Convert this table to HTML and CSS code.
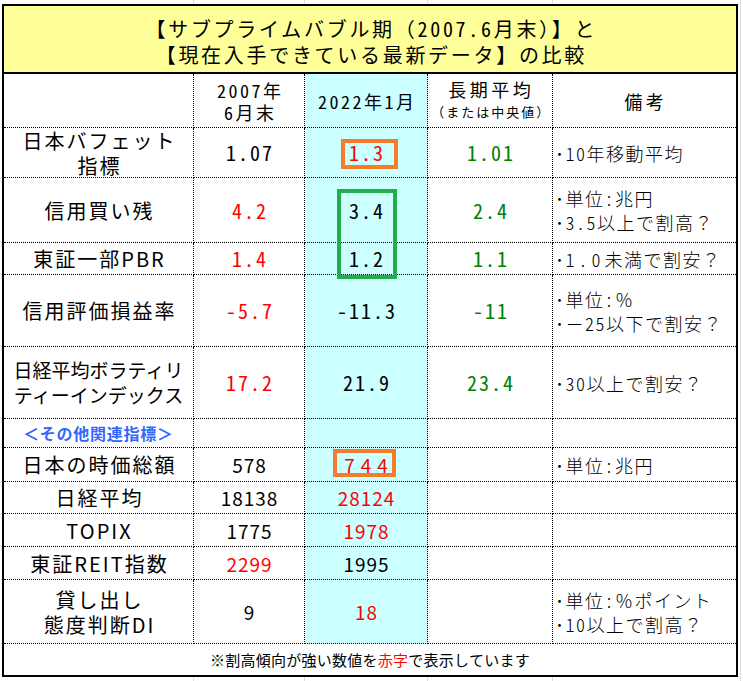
FILE: index.html
```html
<!DOCTYPE html>
<html lang="ja">
<head>
<meta charset="utf-8">
<title>サブプライムバブル期と現在の比較</title>
<link rel="stylesheet" href="styles.css">
</head>
<body>
<div class="sheet">
  <div class="title">
    <div>【サブプライムバブル期（<span class="h">2007.6</span>月末）】と</div>
    <div>【現在入手できている最新データ】の比較</div>
  </div>
  <div class="grid">
    <div class="c"></div>
    <div class="c hd"><div><span class="h">2007</span>年</div><div><span class="h">6</span>月末</div></div>
    <div class="c hd cy"><div><span class="h">2022</span>年<span class="h">1</span>月</div></div>
    <div class="c hd"><div class="big">長期平均</div><div class="small">（または中央値）</div></div>
    <div class="c hd"><div class="big">備考</div></div>

    <div class="c lb"><div>日本バフェット</div><div>指標</div></div>
    <div class="c num h">1.07</div>
    <div class="c num h cy r">1.3</div>
    <div class="c num h g">1.01</div>
    <div class="c note"><div>･<span class="h">10</span>年移動平均</div></div>

    <div class="c lb"><div>信用買い残</div></div>
    <div class="c num h r">4.2</div>
    <div class="c num h cy">3.4</div>
    <div class="c num h g">2.4</div>
    <div class="c note"><div>･単位<span class="h">:</span>兆円</div><div>･<span class="h">3.5</span>以上で割高？</div></div>

    <div class="c lb"><div>東証一部PBR</div></div>
    <div class="c num h r">1.4</div>
    <div class="c num h cy">1.2</div>
    <div class="c num h g">1.1</div>
    <div class="c note"><div>･<span class="h sp">1.0</span>未満で割安？</div></div>

    <div class="c lb"><div>信用評価損益率</div></div>
    <div class="c num h r">-5.7</div>
    <div class="c num h cy">-11.3</div>
    <div class="c num h g">-11</div>
    <div class="c note"><div>･単位<span class="h">:</span>％</div><div>･－<span class="h">25</span>以下で割安？</div></div>

    <div class="c lb vix"><div>日経平均ボラティリ</div><div>ティーインデックス</div></div>
    <div class="c num h r">17.2</div>
    <div class="c num h cy">21.9</div>
    <div class="c num h g">23.4</div>
    <div class="c note"><div>･<span class="h">30</span>以上で割安？</div></div>

    <div class="c blue">＜その他関連指標＞</div>
    <div class="c"></div>
    <div class="c cy"></div>
    <div class="c"></div>
    <div class="c"></div>

    <div class="c lb"><div>日本の時価総額</div></div>
    <div class="c n2">578</div>
    <div class="c n2 cy r wide">744</div>
    <div class="c"></div>
    <div class="c note"><div>･単位<span class="h">:</span>兆円</div></div>

    <div class="c lb"><div>日経平均</div></div>
    <div class="c n2">18138</div>
    <div class="c n2 cy r">28124</div>
    <div class="c"></div>
    <div class="c"></div>

    <div class="c lb"><div>TOPIX</div></div>
    <div class="c n2">1775</div>
    <div class="c n2 cy r">1978</div>
    <div class="c"></div>
    <div class="c"></div>

    <div class="c lb"><div>東証REIT指数</div></div>
    <div class="c n2 r">2299</div>
    <div class="c n2 cy">1995</div>
    <div class="c"></div>
    <div class="c"></div>

    <div class="c lb"><div>貸し出し</div><div>態度判断DI</div></div>
    <div class="c n2">9</div>
    <div class="c n2 cy r">18</div>
    <div class="c"></div>
    <div class="c note"><div>･単位<span class="h">:</span>％ポイント</div><div>･<span class="h">10</span>以上で割高？</div></div>
  </div>
  <div class="foot">※割高傾向が強い数値を<span class="r">赤字</span>で表示しています</div>

  <div class="box box-o1"></div>
  <div class="box box-g"></div>
  <div class="box box-o2"></div>
</div>
</body>
</html>
```

FILE: styles.css
```css
html {
  background: #fff;
}

body {
  margin: 0;
  width: 743px;
  height: 681px;
  overflow: hidden;
  font-family: "Noto Sans CJK JP", "Noto Sans", sans-serif;
  color: #000;
  background-image:
    linear-gradient(to right, transparent 193px, #dcdcdc 193px, #dcdcdc 194px, transparent 194px),
    linear-gradient(to right, transparent 304px, #dcdcdc 304px, #dcdcdc 305px, transparent 305px),
    linear-gradient(to right, transparent 427px, #dcdcdc 427px, #dcdcdc 428px, transparent 428px),
    linear-gradient(to right, transparent 552px, #dcdcdc 552px, #dcdcdc 553px, transparent 553px),
    linear-gradient(to right, transparent 740px, #dcdcdc 740px, #dcdcdc 741px, transparent 741px);
}

.sheet {
  position: relative;
  box-sizing: border-box;
  width: 736px;
  margin: 4px 0 0 2px;
  border: 2px solid #000;
  background: #fff;
}

.title {
  box-sizing: border-box;
  height: 68px;
  padding-top: 5px;
  padding-left: 2.7px;
  border-bottom: 2px solid #000;
  background: #ffff99;
  display: flex;
  flex-direction: column;
  justify-content: center;
  align-items: center;
  font-size: 20px;
  letter-spacing: 2.7px;
  line-height: 26px;
  white-space: nowrap;
}

.grid {
  display: grid;
  grid-template-columns: 190px 111px 123px 125px 183px;
  grid-template-rows: 54px 50px 65px 32px 72px 72px 29px 34px 32px 33px 33px 64px;
}

.c {
  box-sizing: border-box;
  border-right: 1px dotted #000;
  border-bottom: 1px dotted #000;
  display: flex;
  flex-direction: column;
  justify-content: center;
  align-items: center;
  text-align: center;
  white-space: nowrap;
}

.c:nth-child(5n) {
  border-right: none;
}

.cy {
  background: #ccffff;
}

.h {
  font-feature-settings: "hwid" 1;
}

.r {
  color: #ff0000;
}

.g {
  color: #008000;
}

/* header row */
.hd {
  font-size: 18px;
  letter-spacing: 2.5px;
  line-height: 22px;
  padding-left: 2.5px;
}

.hd .big {
  letter-spacing: 3.5px;
}

.hd .small {
  font-size: 13px;
  letter-spacing: 2px;
  line-height: 24px;
}

/* row labels */
.lb {
  font-size: 20px;
  letter-spacing: 2px;
  line-height: 25px;
  padding-left: 2px;
}

.lb.vix {
  font-size: 19px;
  letter-spacing: 0;
  padding-left: 0;
  line-height: 24.5px;
}

.blue {
  color: #3366ff;
  font-size: 16px;
  font-weight: 700;
  letter-spacing: 0.75px;
}

/* numbers */
.num {
  font-size: 20px;
  letter-spacing: 2px;
  padding-left: 2px;
}

.n2 {
  font-size: 19px;
  letter-spacing: 1px;
  padding-left: 1px;
}

.n2.wide {
  letter-spacing: 6px;
  padding-left: 6px;
}

/* notes */
.note {
  align-items: flex-start;
  text-align: left;
  padding-left: 2px;
  font-size: 18px;
  font-weight: 300;
  letter-spacing: 1.5px;
  line-height: 24px;
}

.note .sp {
  letter-spacing: 4px;
}

.foot {
  height: 31px;
  display: flex;
  align-items: center;
  justify-content: center;
  font-size: 15px;
  letter-spacing: 0.25px;
  white-space: nowrap;
}

/* highlight frames drawn over the values */
.box {
  position: absolute;
  box-sizing: border-box;
  border: 4px solid #f47c2a;
}

.box-o1 {
  left: 337px;
  top: 133px;
  width: 57px;
  height: 30px;
}

.box-g {
  left: 333px;
  top: 183px;
  width: 60px;
  height: 90px;
  border-color: #22ac4c;
}

.box-o2 {
  left: 329px;
  top: 443px;
  width: 63px;
  height: 28px;
}
```
